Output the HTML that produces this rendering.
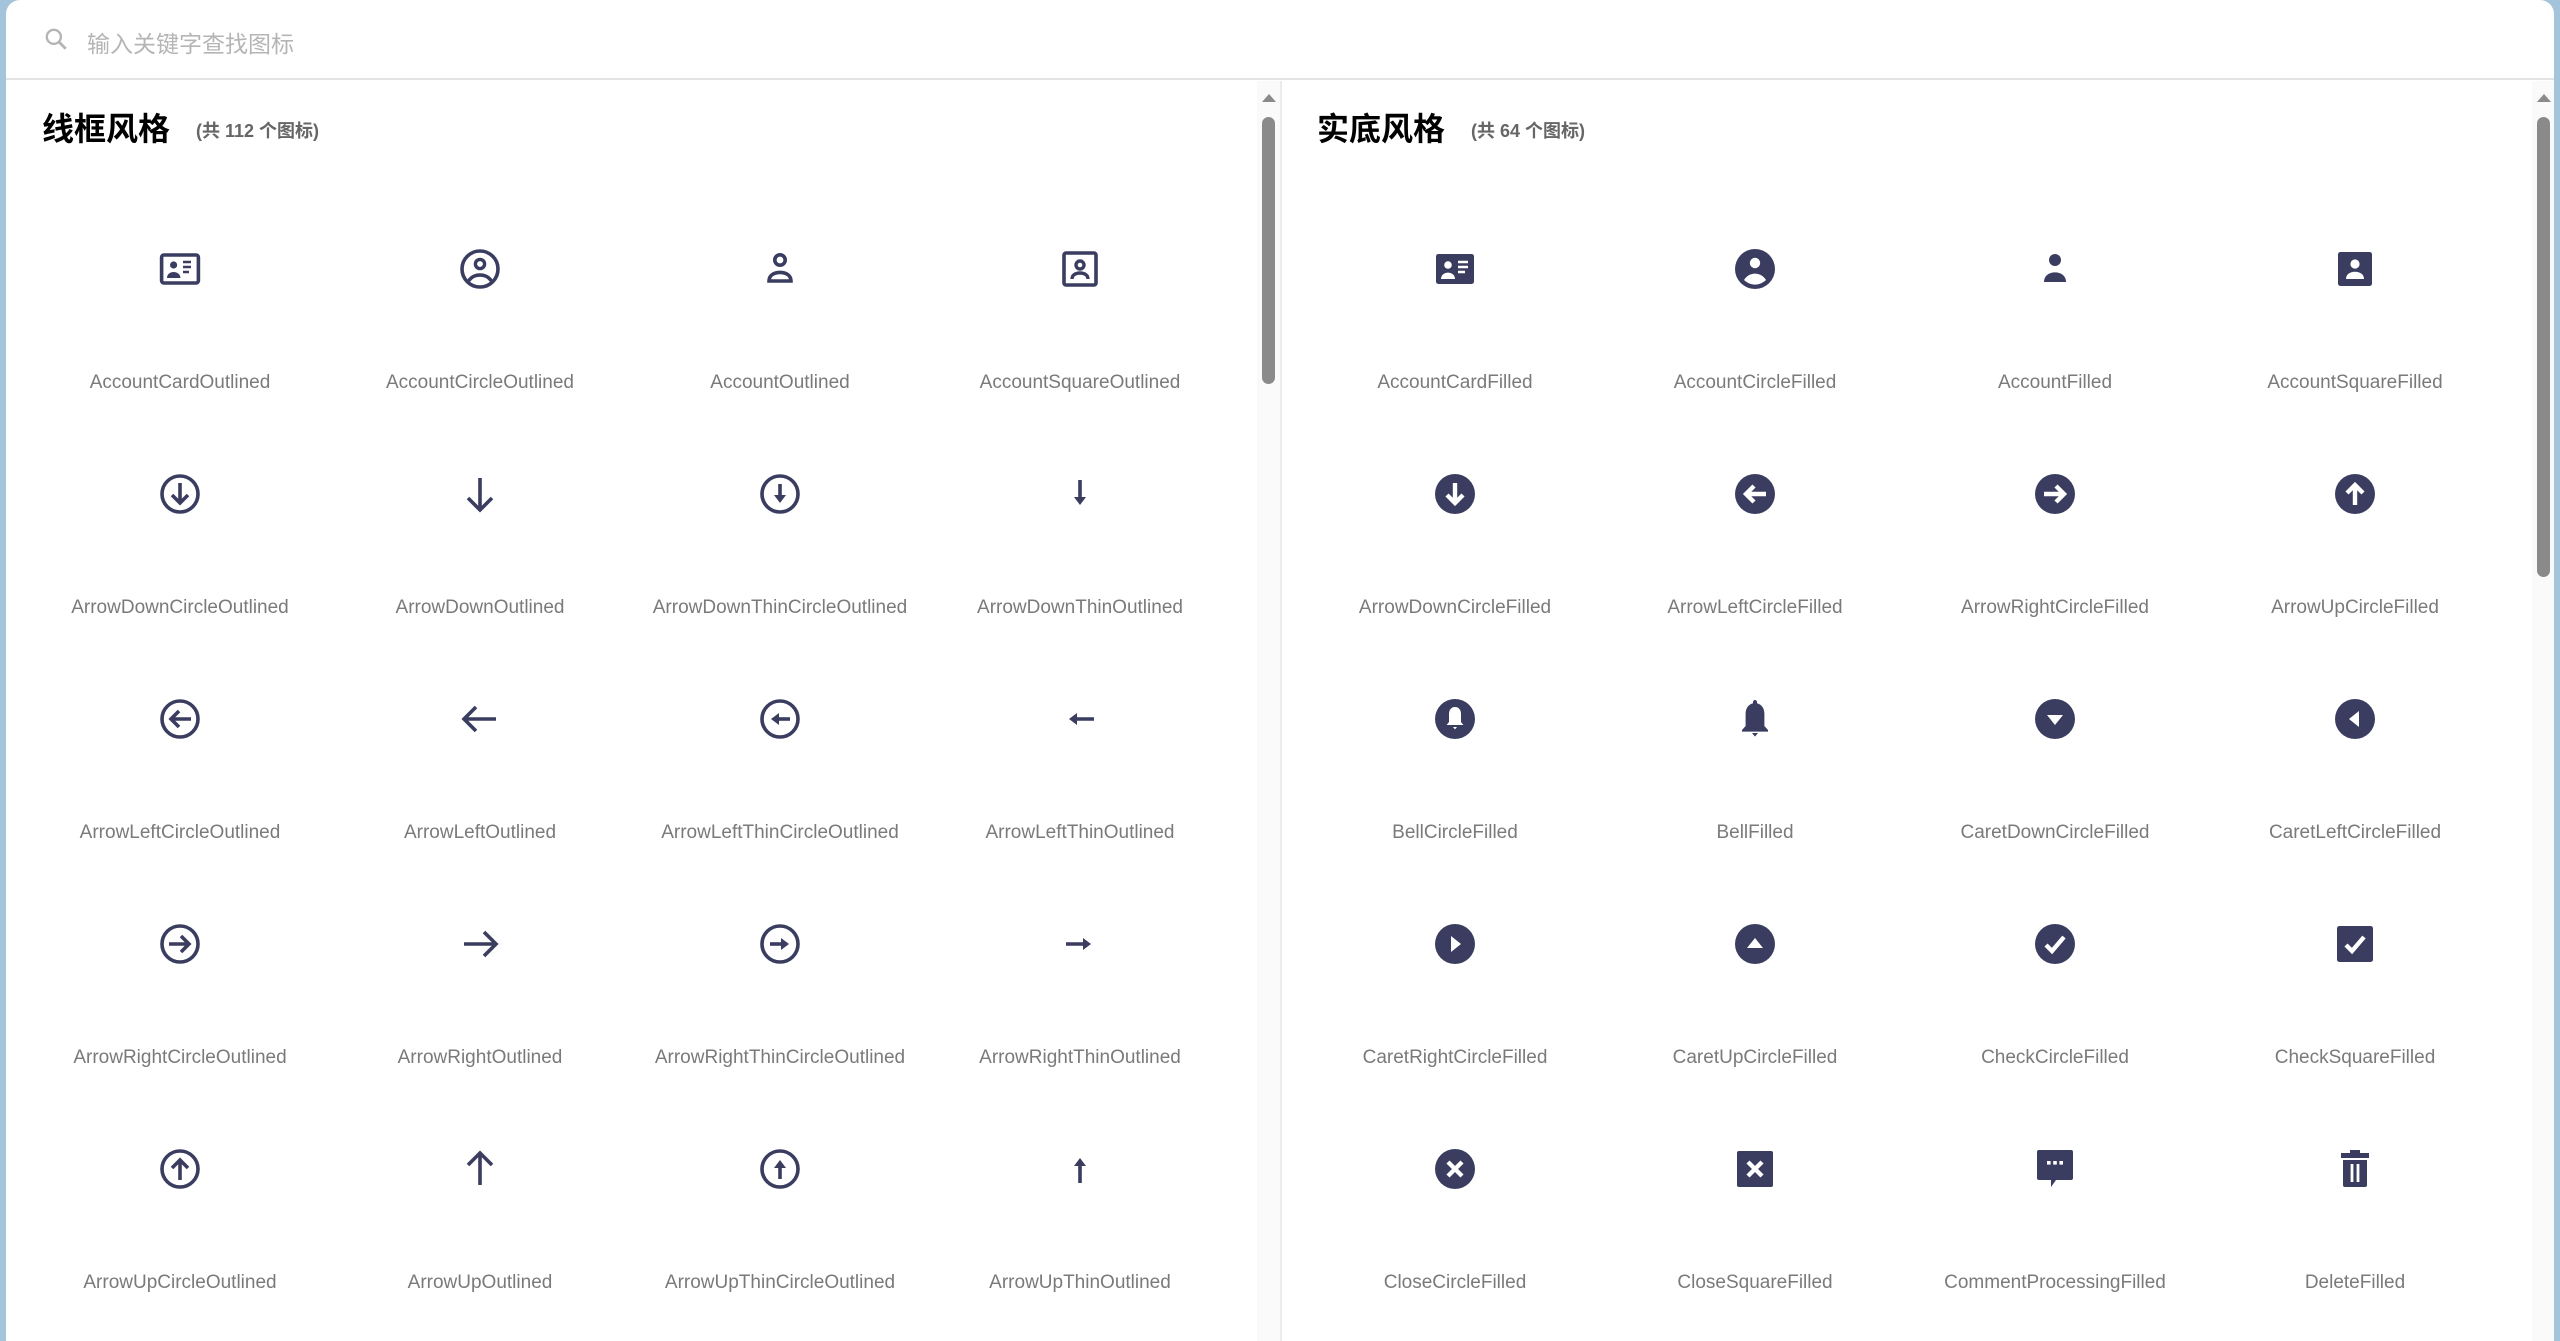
<!DOCTYPE html>
<html><head><meta charset="utf-8"><style>
*{margin:0;padding:0;box-sizing:border-box}
html,body{width:2560px;height:1341px;overflow:hidden;background:#a3c4da}
.card{position:absolute;left:6px;top:0;width:2548px;height:1341px;background:#fff;border-radius:14px 14px 0 0;overflow:hidden}
.search{position:absolute;left:0;top:0;width:100%;height:80px;border-bottom:2px solid #e3e3e3}
.search svg{position:absolute;left:37px;top:26px}
.search span{position:absolute;left:81px;top:25px;font:23px "Liberation Sans","Noto Sans CJK SC",sans-serif;color:#b5b5b5}
.divider{position:absolute;left:1274px;top:81px;width:2px;height:1260px;background:#ececec}
.track{position:absolute;top:81px;width:23px;height:1260px;background:#fafafa}
.arrow{position:absolute;top:94px;width:0;height:0;border-left:7px solid transparent;border-right:7px solid transparent;border-bottom:8px solid #8a8a8a}
.thumb{position:absolute;top:117px;width:13px;background:#8a8a8a;border-radius:7px}
h2{position:absolute;top:104px;font:bold 32px "Liberation Sans","Noto Sans CJK SC",sans-serif;color:#000}
h2 small{font-size:18px;color:#666;margin-left:26px;font-weight:bold;vertical-align:3px}
.grid{position:absolute;top:245px;display:grid;grid-template-columns:repeat(4,300px);grid-auto-rows:225px}
.cell{position:relative;text-align:center}
.cell svg{display:block;margin:0 auto;width:48px;height:48px}
.cell div{position:absolute;left:0;right:0;top:127px;font:19px "Liberation Sans",sans-serif;color:#7a7a7a}
</style></head><body>
<svg width="0" height="0" style="position:absolute">
<defs>
<g id="dn"><path d="M12 4v16M6 14l6 6 6-6" fill="none" stroke="#3a3d5f" stroke-width="1.8"/></g>
<g id="dnc"><circle cx="12" cy="12" r="9" fill="none" stroke="#3a3d5f" stroke-width="1.8"/><path d="M12 6.5v10M8 12.5l4 4 4-4" fill="none" stroke="#3a3d5f" stroke-width="1.8"/></g>
<g id="dntc"><circle cx="12" cy="12" r="9" fill="none" stroke="#3a3d5f" stroke-width="1.8"/><path d="M12 7v6" stroke="#3a3d5f" stroke-width="1.8"/><path d="M9 12.5h6L12 16.5z" fill="#3a3d5f"/></g>
<g id="dnt"><path d="M12 5v9" stroke="#3a3d5f" stroke-width="1.8"/><path d="M9 13.5h6L12 17.5z" fill="#3a3d5f"/></g>
<g id="dncf"><circle cx="12" cy="12" r="10" fill="#3a3d5f"/><path d="M12 6.5v10M8 12.5l4 4 4-4" fill="none" stroke="#fff" stroke-width="2.2"/></g>
<g id="carf"><circle cx="12" cy="12" r="10" fill="#3a3d5f"/><path d="M8 10h8l-4 5z" fill="#fff"/></g>
</defs></svg>
<div class="card">
<div class="search"><svg width="26" height="26" viewBox="0 0 24 24"><circle cx="10" cy="10" r="6.5" fill="none" stroke="#b5b5b5" stroke-width="2.2"/><path d="M15 15l6 6" stroke="#b5b5b5" stroke-width="2.6"/></svg><span>输入关键字查找图标</span></div>

<div class="track" style="left:1251px"></div><div class="arrow" style="left:1256px"></div><div class="thumb" style="left:1256px;height:267px"></div>
<div class="divider"></div>
<div class="track" style="left:2526px"></div><div class="arrow" style="left:2531px"></div><div class="thumb" style="left:2531px;height:460px"></div>

<h2 style="left:36px">线框风格<small>(共 112 个图标)</small></h2>
<h2 style="left:1311px">实底风格<small>(共 64 个图标)</small></h2>

<div class="grid" style="left:24px">
<div class="cell"><svg viewBox="0 0 24 24"><rect x="2.8" y="5" width="18.4" height="14" rx="1.2" fill="none" stroke="#3a3d5f" stroke-width="1.8"/><circle cx="8.8" cy="10" r="1.8" fill="#3a3d5f"/><path d="M5.5 16.5c0-2 1.6-3 3.3-3s3.4 1 3.4 3z" fill="#3a3d5f"/><path d="M13.5 8.5h4M13.5 11h4M13.5 13.5h3" stroke="#3a3d5f" stroke-width="1.3"/></svg><div>AccountCardOutlined</div></div>
<div class="cell"><svg viewBox="0 0 24 24"><circle cx="12" cy="12" r="9" fill="none" stroke="#3a3d5f" stroke-width="1.8"/><circle cx="12" cy="9.5" r="2.3" fill="none" stroke="#3a3d5f" stroke-width="1.7"/><path d="M6.3 18c1.3-2 3.4-3 5.7-3s4.4 1 5.7 3" fill="none" stroke="#3a3d5f" stroke-width="1.7"/></svg><div>AccountCircleOutlined</div></div>
<div class="cell"><svg viewBox="0 0 24 24"><circle cx="12" cy="7.5" r="2.6" fill="none" stroke="#3a3d5f" stroke-width="1.8"/><path d="M6.5 18c0-2.8 2.5-4.3 5.5-4.3s5.5 1.5 5.5 4.3z" fill="none" stroke="#3a3d5f" stroke-width="1.8"/></svg><div>AccountOutlined</div></div>
<div class="cell"><svg viewBox="0 0 24 24"><rect x="4" y="4" width="16" height="16" rx="1" fill="none" stroke="#3a3d5f" stroke-width="1.8"/><circle cx="12" cy="10" r="2" fill="none" stroke="#3a3d5f" stroke-width="1.7"/><path d="M8 17c0-2 1.8-3 4-3s4 1 4 3" fill="none" stroke="#3a3d5f" stroke-width="1.7"/></svg><div>AccountSquareOutlined</div></div>

<div class="cell"><svg viewBox="0 0 24 24"><use href="#dnc"/></svg><div>ArrowDownCircleOutlined</div></div>
<div class="cell"><svg viewBox="0 0 24 24"><use href="#dn"/></svg><div>ArrowDownOutlined</div></div>
<div class="cell"><svg viewBox="0 0 24 24"><use href="#dntc"/></svg><div>ArrowDownThinCircleOutlined</div></div>
<div class="cell"><svg viewBox="0 0 24 24"><use href="#dnt"/></svg><div>ArrowDownThinOutlined</div></div>

<div class="cell"><svg viewBox="0 0 24 24"><use href="#dnc" transform="rotate(90 12 12)"/></svg><div>ArrowLeftCircleOutlined</div></div>
<div class="cell"><svg viewBox="0 0 24 24"><use href="#dn" transform="rotate(90 12 12)"/></svg><div>ArrowLeftOutlined</div></div>
<div class="cell"><svg viewBox="0 0 24 24"><use href="#dntc" transform="rotate(90 12 12)"/></svg><div>ArrowLeftThinCircleOutlined</div></div>
<div class="cell"><svg viewBox="0 0 24 24"><use href="#dnt" transform="rotate(90 12 12)"/></svg><div>ArrowLeftThinOutlined</div></div>

<div class="cell"><svg viewBox="0 0 24 24"><use href="#dnc" transform="rotate(-90 12 12)"/></svg><div>ArrowRightCircleOutlined</div></div>
<div class="cell"><svg viewBox="0 0 24 24"><use href="#dn" transform="rotate(-90 12 12)"/></svg><div>ArrowRightOutlined</div></div>
<div class="cell"><svg viewBox="0 0 24 24"><use href="#dntc" transform="rotate(-90 12 12)"/></svg><div>ArrowRightThinCircleOutlined</div></div>
<div class="cell"><svg viewBox="0 0 24 24"><use href="#dnt" transform="rotate(-90 12 12)"/></svg><div>ArrowRightThinOutlined</div></div>

<div class="cell"><svg viewBox="0 0 24 24"><use href="#dnc" transform="rotate(180 12 12)"/></svg><div>ArrowUpCircleOutlined</div></div>
<div class="cell"><svg viewBox="0 0 24 24"><use href="#dn" transform="rotate(180 12 12)"/></svg><div>ArrowUpOutlined</div></div>
<div class="cell"><svg viewBox="0 0 24 24"><use href="#dntc" transform="rotate(180 12 12)"/></svg><div>ArrowUpThinCircleOutlined</div></div>
<div class="cell"><svg viewBox="0 0 24 24"><use href="#dnt" transform="rotate(180 12 12)"/></svg><div>ArrowUpThinOutlined</div></div>
</div>

<div class="grid" style="left:1299px">
<div class="cell"><svg viewBox="0 0 24 24"><rect x="2.5" y="4.5" width="19" height="15" rx="1.2" fill="#3a3d5f"/><circle cx="8.5" cy="10" r="1.9" fill="#fff"/><path d="M5 17c0-2 1.6-3.2 3.5-3.2S12 15 12 17z" fill="#fff"/><path d="M13.5 8.5h5M13.5 11h5M13.5 13.5h3.5" stroke="#fff" stroke-width="1.2"/></svg><div>AccountCardFilled</div></div>
<div class="cell"><svg viewBox="0 0 24 24"><circle cx="12" cy="12" r="10" fill="#3a3d5f"/><circle cx="12" cy="9" r="2.6" fill="#fff"/><path d="M6.5 17.5c1.2-2 3.2-3.2 5.5-3.2s4.3 1.2 5.5 3.2c-1.5 1.4-3.4 2.3-5.5 2.3s-4-.9-5.5-2.3z" fill="#fff"/></svg><div>AccountCircleFilled</div></div>
<div class="cell"><svg viewBox="0 0 24 24"><circle cx="12" cy="7.5" r="3" fill="#3a3d5f"/><path d="M6.5 18.5c0-3.1 2.5-4.8 5.5-4.8s5.5 1.7 5.5 4.8z" fill="#3a3d5f"/></svg><div>AccountFilled</div></div>
<div class="cell"><svg viewBox="0 0 24 24"><rect x="3.5" y="3.5" width="17" height="17" rx="1.2" fill="#3a3d5f"/><circle cx="12" cy="9.5" r="2.3" fill="#fff"/><path d="M7.5 17c0-2.3 2-3.6 4.5-3.6s4.5 1.3 4.5 3.6z" fill="#fff"/></svg><div>AccountSquareFilled</div></div>

<div class="cell"><svg viewBox="0 0 24 24"><use href="#dncf"/></svg><div>ArrowDownCircleFilled</div></div>
<div class="cell"><svg viewBox="0 0 24 24"><use href="#dncf" transform="rotate(90 12 12)"/></svg><div>ArrowLeftCircleFilled</div></div>
<div class="cell"><svg viewBox="0 0 24 24"><use href="#dncf" transform="rotate(-90 12 12)"/></svg><div>ArrowRightCircleFilled</div></div>
<div class="cell"><svg viewBox="0 0 24 24"><use href="#dncf" transform="rotate(180 12 12)"/></svg><div>ArrowUpCircleFilled</div></div>

<div class="cell"><svg viewBox="0 0 24 24"><circle cx="12" cy="12" r="10" fill="#3a3d5f"/><path d="M12 6c-2 0-3 1.6-3 3.5v4L7.8 15h8.4L15 13.5v-4C15 7.6 14 6 12 6z" fill="#fff"/><path d="M11 16h2l-1 1.2z" fill="#fff"/></svg><div>BellCircleFilled</div></div>
<div class="cell"><svg viewBox="0 0 24 24"><path d="M12 2.5c-.6 0-1 .5-1 1v.6C8.5 4.8 7.3 6.8 7.3 9.5v6L5.5 17.5v.8h13v-.8l-1.8-2v-6c0-2.7-1.2-4.7-3.7-5.4V3.5c0-.5-.4-1-1-1z" fill="#3a3d5f"/><path d="M10.5 19h3l-1.5 1.8z" fill="#3a3d5f"/></svg><div>BellFilled</div></div>
<div class="cell"><svg viewBox="0 0 24 24"><use href="#carf"/></svg><div>CaretDownCircleFilled</div></div>
<div class="cell"><svg viewBox="0 0 24 24"><use href="#carf" transform="rotate(90 12 12)"/></svg><div>CaretLeftCircleFilled</div></div>

<div class="cell"><svg viewBox="0 0 24 24"><use href="#carf" transform="rotate(-90 12 12)"/></svg><div>CaretRightCircleFilled</div></div>
<div class="cell"><svg viewBox="0 0 24 24"><use href="#carf" transform="rotate(180 12 12)"/></svg><div>CaretUpCircleFilled</div></div>
<div class="cell"><svg viewBox="0 0 24 24"><circle cx="12" cy="12" r="10" fill="#3a3d5f"/><path d="M7.5 12.5l3 3 6-7" fill="none" stroke="#fff" stroke-width="2.2"/></svg><div>CheckCircleFilled</div></div>
<div class="cell"><svg viewBox="0 0 24 24"><rect x="3" y="3" width="18" height="18" rx="1.2" fill="#3a3d5f"/><path d="M7.5 12.5l3 3 6-7" fill="none" stroke="#fff" stroke-width="2.2"/></svg><div>CheckSquareFilled</div></div>

<div class="cell"><svg viewBox="0 0 24 24"><circle cx="12" cy="12" r="10" fill="#3a3d5f"/><path d="M8.5 8.5l7 7M15.5 8.5l-7 7" stroke="#fff" stroke-width="2.2"/></svg><div>CloseCircleFilled</div></div>
<div class="cell"><svg viewBox="0 0 24 24"><rect x="3" y="3" width="18" height="18" rx="1" fill="#3a3d5f"/><path d="M8.5 8.5l7 7M15.5 8.5l-7 7" stroke="#fff" stroke-width="2.2"/></svg><div>CloseSquareFilled</div></div>
<div class="cell"><svg viewBox="0 0 24 24"><path d="M4 2.5h16a1 1 0 0 1 1 1v13a1 1 0 0 1-1 1h-7.5L10 21v-3.5H4a1 1 0 0 1-1-1v-13a1 1 0 0 1 1-1z" fill="#3a3d5f"/><rect x="8" y="8" width="1.8" height="1.8" fill="#fff"/><rect x="11.1" y="8" width="1.8" height="1.8" fill="#fff"/><rect x="14.2" y="8" width="1.8" height="1.8" fill="#fff"/></svg><div>CommentProcessingFilled</div></div>
<div class="cell"><svg viewBox="0 0 24 24"><path d="M9.5 2.5h5V4H19v2.5H5V4h4.5z" fill="#3a3d5f"/><path d="M6 7.5h12v12.5a1 1 0 0 1-1 1H7a1 1 0 0 1-1-1z" fill="#3a3d5f"/><path d="M10.5 9.5v9M13.5 9.5v9" stroke="#fff" stroke-width="1.4"/></svg><div>DeleteFilled</div></div>
</div>
</div>
</body></html>
